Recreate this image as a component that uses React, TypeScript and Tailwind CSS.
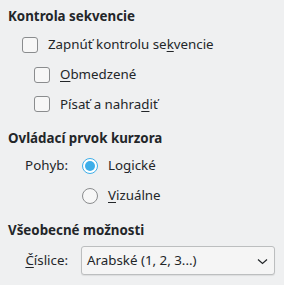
import React, { useState } from "react"

const font = { fontFamily: '"Noto Sans", sans-serif' }

function Mnemonic({ text, at }: { text: string; at: number }) {
  return (
    <>
      {text.slice(0, at)}
      <span className="underline underline-offset-[2px] decoration-[1px]">{text[at]}</span>
      {text.slice(at + 1)}
    </>
  )
}

function Checkbox({ label, indent }: { label: React.ReactNode; indent?: boolean }) {
  return (
    <div className={`flex items-center gap-[10px] ${indent ? "pl-[26px]" : "pl-[14px]"}`}>
      <span className="w-4 h-4 rounded-[3px] border border-[#8a8c8e] bg-[#f7f7f7] shrink-0" />
      <span>{label}</span>
    </div>
  )
}

function Radio({ checked, label }: { checked: boolean; label: React.ReactNode }) {
  return (
    <div className="flex items-center gap-[10px]">
      <span
        className={`w-4 h-4 rounded-full border flex items-center justify-center shrink-0 ${
          checked ? "border-[#3daee9] bg-white" : "border-[#8a8c8e] bg-[#f7f7f7]"
        }`}
      >
        {checked && <span className="w-[10px] h-[10px] rounded-full bg-[#3daee9]" />}
      </span>
      <span>{label}</span>
    </div>
  )
}

export default function App() {
  const [mode] = useState("logical")

  return (
    <div
      className="w-[284px] h-[285px] bg-[#eff0f1] text-[#232629] text-[13.33px] pl-2 flex flex-col"
      style={font}
    >
      <div className="h-5 mt-[7px] flex items-center font-bold">Kontrola sekvencie</div>
      <div className="h-[30px] mt-[3px] flex items-center">
        <Checkbox label={<Mnemonic text="Zapnúť kontrolu sekvencie" at={18} />} />
      </div>
      <div className="h-[30px] flex items-center">
        <Checkbox indent label={<Mnemonic text="Obmedzené" at={0} />} />
      </div>
      <div className="h-[29px] flex items-center">
        <Checkbox indent label={<Mnemonic text="Písať a nahradiť" at={13} />} />
      </div>

      <div className="h-5 mt-[10px] flex items-center font-bold">Ovládací prvok kurzora</div>
      <div className="grid grid-cols-[60px_1fr] gap-x-[14px] mt-[2px]">
        <div className="h-[30px] flex items-center justify-end">Pohyb:</div>
        <div className="h-[30px] flex items-center">
          <Radio checked={mode === "logical"} label={<Mnemonic text="Logické" at={2} />} />
        </div>
        <div />
        <div className="h-[30px] flex items-center">
          <Radio checked={mode === "visual"} label={<Mnemonic text="Vizuálne" at={0} />} />
        </div>
      </div>

      <div className="h-5 mt-[10px] flex items-center font-bold">Všeobecné možnosti</div>
      <div className="grid grid-cols-[60px_1fr] gap-x-[13px] mt-[5px]">
        <div className="h-[29px] flex items-center justify-end">
          <Mnemonic text="Číslice:" at={0} />
        </div>
        <div className="h-[29px] w-[194px] rounded-[3px] border border-[#bcbebf] bg-[#f5f5f5] shadow-[0_1px_1px_rgba(0,0,0,0.08)] flex items-center pl-[5px] pr-[6px]">
          <span className="flex-1">Arabské (1, 2, 3...)</span>
          <svg width="11" height="7" viewBox="0 0 11 7" className="mt-[1px]">
            <path d="M1 1.5 L5.5 5.5 L10 1.5" fill="none" stroke="#232629" strokeWidth="1.2" />
          </svg>
        </div>
      </div>
    </div>
  )
}
